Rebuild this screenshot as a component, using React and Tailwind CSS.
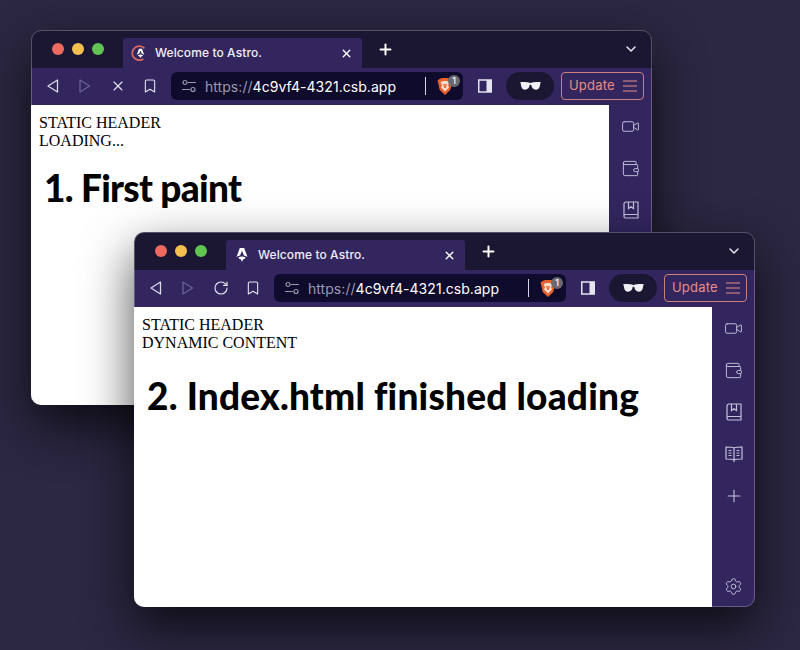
import React from 'react';
import { Bookmark, ChevronDown, Plus, RotateCw, Settings, Video, Wallet, X } from 'lucide-react';

function AstroLogo({ className }) {
  return (
    <svg viewBox="0 0 16 16" className={className} fill="currentColor">
      <path d="M5.800 1h4.400l3.300 9c-1.200-.8-2.400-1.300-3.600-1.500L8 3.800 6.100 8.500C4.900 8.700 3.700 9.200 2.500 10z" />
      <path d="M4.600 10.300c1.900-1 4.900-1 6.800 0 0 1.300-1 2-2 1.900-.3 0-.5.200-.5.500L8 15l-.9-2.300c0-.3-.2-.5-.5-.5-1 .1-2-.6-2-1.900z" />
    </svg>
  );
}

function LoadingFavicon() {
  return (
    <span className="relative flex h-4 w-4 items-center justify-center text-white">
      <svg viewBox="0 0 16 16" className="absolute inset-0 h-4 w-4" fill="none" stroke="#d9685f" strokeWidth="1.800" strokeLinecap="round">
        <path d="M12.800 2.800A7 7 0 1 0 11.800 14.200" />
      </svg>
      <AstroLogo className="ml-[2px] h-[11px] w-[11px]" />
    </span>
  );
}

function BackIcon() {
  return (
    <svg viewBox="0 0 14 16" className="h-4 w-3.5 text-[#dcd9ea]" fill="none" stroke="currentColor" strokeWidth="1.300" strokeLinejoin="round">
      <path d="M11.500 2v12L2 8z" />
    </svg>
  );
}

function ForwardIcon() {
  return (
    <svg viewBox="0 0 14 16" className="h-4 w-3.5 text-[#6a5f9a]" fill="none" stroke="currentColor" strokeWidth="1.300" strokeLinejoin="round">
      <path d="M2 2v12l9.500-6z" />
    </svg>
  );
}

function SlidersIcon() {
  return (
    <svg viewBox="0 0 16 16" className="h-4 w-4 text-[#9a96ad]" fill="none" stroke="currentColor" strokeWidth="1.200">
      <circle cx="4" cy="4.500" r="2" />
      <path d="M7 4.500h8M1 11.500h8" />
      <circle cx="12" cy="11.500" r="2" />
    </svg>
  );
}

function BraveIcon() {
  return (
    <span className="relative flex h-[19px] w-4 items-center justify-center">
      <svg viewBox="0 0 16 18" className="h-[19px] w-4">
        <path fill="#e8602c" d="M2.500 1.500 5 .5h6l2.500 1 2 1.500-.8 3-1.400 6.500L8 17.500 2.700 12.500 1.300 6 .5 3z" />
        <path fill="#f9dccd" d="M3.500 4.500 6.500 3.500h3l3 1L11 8l1 2-4 4-4-4 1-2z" />
        <path fill="#e8602c" d="M6 6.500h1.500L8 9l.5-2.500H10L8.600 10.500H7.400z" />
      </svg>
      <span className="absolute -top-[2px] -right-[7px] flex h-3 w-3 items-center justify-center rounded-full bg-[#6a6a70] text-[9px] leading-none font-medium text-white">1</span>
    </span>
  );
}

function PanelIcon() {
  return (
    <svg viewBox="0 0 14 14" className="h-3.5 w-3.5">
      <rect x="0.750" y="1" width="12.500" height="12" fill="none" stroke="#e4e2ee" strokeWidth="1.500" />
      <rect x="8.500" y="1" width="4.500" height="12" fill="#e4e2ee" />
    </svg>
  );
}

function GlassesIcon() {
  return (
    <svg viewBox="0 0 22 10" className="h-[10px] w-[21px]" fill="#f1f0f5">
      <path d="M0 1.200C4 .4 8 .6 11 1.800c3-1.200 7-1.400 11-.6l-.8 1.300c-.3 3.700-1.500 6.500-4.400 6.500-3 0-4.700-2.500-5-5.200-.5-.2-1-.2-1.600 0-.3 2.700-2 5.200-5 5.200C2.300 9 1.100 6.200.8 2.500z" />
    </svg>
  );
}

function BookIcon() {
  return (
    <svg viewBox="0 0 16 18" className="h-[18px] w-4" fill="none" stroke="currentColor" strokeWidth="1.200">
      <path d="M15 13.500V1H3a2 2 0 0 0-2 2v12.500A1.500 1.500 0 0 1 2.500 13.500H15v3.500H2.500A1.500 1.500 0 0 1 1 15.500" />
      <path d="M5.500 1v6.500l2.500-1.800 2.500 1.800V1" />
    </svg>
  );
}

function ReaderIcon() {
  return (
    <svg viewBox="0 0 18 18" className="h-[18px] w-[18px]" fill="none" stroke="currentColor" strokeWidth="1.200">
      <path d="M9 3C7 2 4 2 1 2v12c3 0 6 0 8 1 2-1 5-1 8-1V2c-3 0-6 0-8 1zM9 3v14" />
      <path d="M3.500 5.500h3M3.500 8h3M3.500 10.500h3M11.500 5.500h3M11.500 8h3M11.500 10.500h3" />
    </svg>
  );
}

function HeaderBar({ favicon, reload }) {
  return (
    <>
      <div className="flex h-[38px] bg-[#1b1733]">
        <div className="flex w-[92px] items-center gap-2 pl-[21px] pb-[1px]">
          <span className="h-3 w-3 rounded-full bg-[#ec6a5e]" />
          <span className="h-3 w-3 rounded-full bg-[#f4bf4f]" />
          <span className="h-3 w-3 rounded-full bg-[#61c554]" />
        </div>
        <div className="mt-2 flex h-[30px] w-[239px] items-center rounded-t-[3px] bg-[#33265f] pr-[9px] pl-2 text-white">
          <span className="flex w-4 justify-center">{favicon}</span>
          <span className="ml-[8px] flex-1 text-[12px] font-medium tracking-[0.1px] text-[#f1eff8]">Welcome to Astro.</span>
          <X size={13} strokeWidth={2.600} />
        </div>
        <div className="flex flex-1 items-center justify-between pr-[13px] pl-[15px] text-white">
          <Plus size={17} strokeWidth={2.800} />
          <ChevronDown size={16} strokeWidth={2.200} className="text-[#e8e6f2]" />
        </div>
      </div>
      <div className="flex h-[37px] items-center bg-[#33265f] pb-[1px]">
        <div className="flex w-[140px] items-center pl-[15px]">
          <span className="flex w-[32px] justify-start"><BackIcon /></span>
          <span className="flex w-[32px] justify-start"><ForwardIcon /></span>
          <span className="flex w-[32px] justify-start text-[#e8e6f2]">
            {reload ? <RotateCw size={16} strokeWidth={1.700} /> : <X size={16} strokeWidth={1.700} />}
          </span>
          <span className="flex text-[#e8e6f2]"><Bookmark size={16} strokeWidth={1.600} /></span>
        </div>
        <div className="flex h-[28px] w-[292px] items-center rounded-md bg-[#0f0b2c] pr-[10px] pl-[10px]">
          <SlidersIcon />
          <span className="ml-[8px] flex-1 font-['Inter',sans-serif] text-[14px] tracking-[0.05px] text-[#9c98b0]">
            https://<span className="text-white">4c9vf4-4321.csb.app</span>
          </span>
          <span className="mr-[11px] h-[18px] w-px bg-[#d8d6e2]" />
          <BraveIcon />
        </div>
        <span className="flex w-[43px] justify-center"><PanelIcon /></span>
        <span className="flex h-[28px] w-[48px] items-center justify-center rounded-full bg-[#1b1733]"><GlassesIcon /></span>
        <div className="ml-[7px] flex h-[28px] w-[83px] items-center justify-between rounded-[4px] border border-[#c9807c] pr-[6px] pl-[7px] text-[#e58d86]">
          <span className="font-['Inter',sans-serif] text-[13px] tracking-[0.2px]">Update</span>
          <svg viewBox="0 0 14 12" className="h-3 w-3.5" fill="none" stroke="currentColor" strokeWidth="1.200">
            <path d="M0 1h14M0 6h14M0 11h14" />
          </svg>
        </div>
      </div>
    </>
  );
}

function SideRail() {
  return (
    <div className="flex w-[43px] flex-col items-center bg-[#33265f] pt-[12px] pb-[12px] text-[#c5c0dc]">
      <span className="flex h-[18px] items-center"><Video size={19} strokeWidth={1.200} /></span>
      <span className="mt-[24px] flex h-[18px] items-center"><Wallet size={19} strokeWidth={1.200} /></span>
      <span className="mt-[24px] flex h-[18px] items-center"><BookIcon /></span>
      <span className="mt-[24px] flex h-[18px] items-center"><ReaderIcon /></span>
      <span className="mt-[24px] flex h-[18px] items-center"><Plus size={20} strokeWidth={1.300} /></span>
      <span className="mt-auto flex h-[18px] items-center"><Settings size={19} strokeWidth={1.200} /></span>
    </div>
  );
}

function BrowserWindow({ className, favicon, reload, line, title, titleClass }) {
  return (
    <div className={`absolute h-[375px] w-[621px] rounded-[10px] shadow-[0_20px_50px_rgba(0,0,0,0.7)] ${className}`}>
      <div className="flex h-full flex-col overflow-hidden rounded-[10px] font-['Inter',sans-serif]">
        <HeaderBar favicon={favicon} reload={reload} />
        <div className="flex flex-1 overflow-hidden">
          <div className="flex-1 bg-white px-2 pt-[9px] font-['Liberation_Serif',serif] text-[16px] leading-[18px] text-black">
            <p>STATIC HEADER</p>
            <p>{line}</p>
            <h1 className={`ml-[5px] font-['Lato',sans-serif] text-[37px] leading-[44px] font-black ${titleClass}`}>{title}</h1>
          </div>
          <SideRail />
        </div>
      </div>
      <div className="pointer-events-none absolute inset-0 rounded-[10px] border border-white/25" />
    </div>
  );
}

export default function App() {
  return (
    <div className="relative h-[650px] w-[800px] overflow-hidden bg-[#2c2742]">
      <BrowserWindow
        className="top-[30px] left-[31px]"
        favicon={<LoadingFavicon />}
        line="LOADING..."
        title="1. First paint"
        titleClass="mt-[16px] tracking-[-0.7px]"
      />
      <BrowserWindow
        className="top-[232px] left-[134px]"
        favicon={<AstroLogo className="h-4 w-4 text-white" />}
        reload
        line="DYNAMIC CONTENT"
        title="2. Index.html finished loading"
        titleClass="mt-[22px] tracking-[0.2px]"
      />
    </div>
  );
}
